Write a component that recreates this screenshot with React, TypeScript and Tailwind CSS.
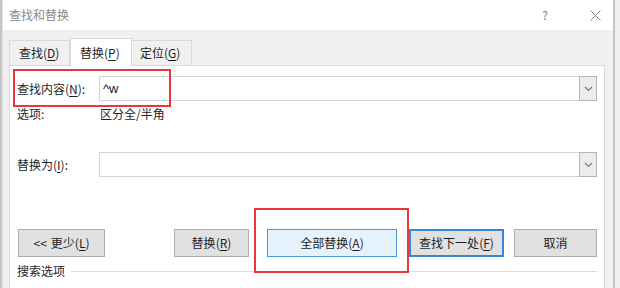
import React from "react";

const F = { fontFamily: '"Noto Sans CJK SC", "Noto Sans", "Liberation Sans", sans-serif' };

function Acc({ pre, k }: { pre: string; k: string }) {
  return (
    <span>
      {pre}(<span className="underline underline-offset-2">{k}</span>)
    </span>
  );
}

function Chevron() {
  return (
    <svg width="9" height="6" viewBox="0 0 9 6">
      <path d="M1 1 L4.5 4.5 L8 1" fill="none" stroke="#7a7a7a" strokeWidth="1.2" />
    </svg>
  );
}

function Combo({ value }: { value?: string }) {
  return (
    <div className="flex h-[25px] flex-1 border border-[#d4d4d4] bg-white">
      <div className="flex flex-1 items-center pl-[3px] text-[13px] text-[#1a1a1a]" style={{ fontFamily: '"Liberation Sans", sans-serif' }}>
        {value}
      </div>
      <div className="flex w-[18px] items-center justify-center border border-[#b5b5b5] bg-[#ececec] -my-px -mr-px">
        <Chevron />
      </div>
    </div>
  );
}

export default function App() {
  return (
    <div className="relative flex h-[288px] w-[620px] items-start overflow-hidden bg-[#f0f0f0] text-[12px] text-[#1e1e1e]" style={F}>
      <div className="h-[288px] w-[2px] bg-[#c6c6c6]" />
      <div className="h-[288px] w-[1px] bg-[#e6e6e6]" />
      <div className="flex h-[300px] flex-1 flex-col">
        <div className="flex h-[30px] items-center bg-white pl-[6px] text-[12px] text-[#8a8a8a]">
          <span className="flex-1">查找和替换</span>
          <span className="mr-[42px] text-[12px] text-[#7a7a7a]">?</span>
          <svg width="11" height="11" viewBox="0 0 11 11" className="mr-[12px]">
            <path d="M0.5 0.5 L10.5 10.5 M10.5 0.5 L0.5 10.5" stroke="#8a8a8a" strokeWidth="1" />
          </svg>
        </div>
        <div className="flex flex-1 flex-col pl-[6px] pr-[8px] pt-[8px]">
          <div className="flex h-[27px] items-end">
            <div className="flex h-[25px] w-[61px] items-center border border-b-0 border-[#d9d9d9] bg-[#f0f0f0] pl-[9px]">
              <Acc pre="查找" k="D" />
            </div>
            <div className="relative z-10 -mb-px flex h-[28px] w-[62px] items-center border border-b-0 border-[#d9d9d9] bg-white pl-[9px]">
              <Acc pre="替换" k="P" />
            </div>
            <div className="flex h-[25px] w-[60px] items-center border border-b-0 border-l-0 border-[#d9d9d9] bg-[#f0f0f0] pl-[8px]">
              <Acc pre="定位" k="G" />
            </div>
          </div>
          <div className="flex flex-1 flex-col border border-[#d9d9d9] bg-white pl-[7px] pr-[7px] pt-[10px]">
            <div className="flex items-center">
              <div className="w-[82px]">
                <Acc pre="查找内容" k="N" />:
              </div>
              <Combo value="^w" />
            </div>
            <div className="mt-[5px] flex h-[16px] items-center">
              <div className="w-[83px]">选项:</div>
              <div>区分全/半角</div>
            </div>
            <div className="mt-[30px] flex items-center">
              <div className="w-[82px]">
                <Acc pre="替换为" k="I" />:
              </div>
              <Combo />
            </div>
            <div className="mt-[52px] flex h-[28px] pl-[1px]">
              <div className="flex w-[87px] items-center justify-center border border-[#adadad] bg-[#e1e1e1]">
                &lt;&lt; <span className="ml-[4px]"><Acc pre="更少" k="L" /></span>
              </div>
              <div className="ml-[69px] flex w-[75px] items-center justify-center border border-[#adadad] bg-[#e1e1e1]">
                <Acc pre="替换" k="R" />
              </div>
              <div className="ml-[18px] flex w-[130px] items-center justify-center border border-[#4a9ae0] bg-[#e5f1fb]">
                <Acc pre="全部替换" k="A" />
              </div>
              <div className="ml-[12px] flex w-[95px] items-center justify-center border-2 border-[#2f88d8] bg-[#e1e1e1]">
                <Acc pre="查找下一处" k="F" />
              </div>
              <div className="ml-[10px] flex w-[83px] items-center justify-center border border-[#adadad] bg-[#e1e1e1]">
                取消
              </div>
            </div>
            <div className="mt-[6px] flex h-[16px] items-center">
              <span>搜索选项</span>
              <div className="ml-[6px] h-px flex-1 bg-[#dcdcdc]" />
            </div>
          </div>
        </div>
      </div>
      <div className="h-[288px] w-[2px] bg-[#c4c4c4]" />
      <div className="h-[288px] w-[5px] bg-[#f0f0f0]" />

      <div className="absolute left-[13px] top-[69px] h-[38px] w-[158px] border-2 border-[#e8383d]" />
      <div className="absolute left-[254px] top-[208px] h-[65px] w-[155px] border-2 border-[#e8383d]" />
    </div>
  );
}
